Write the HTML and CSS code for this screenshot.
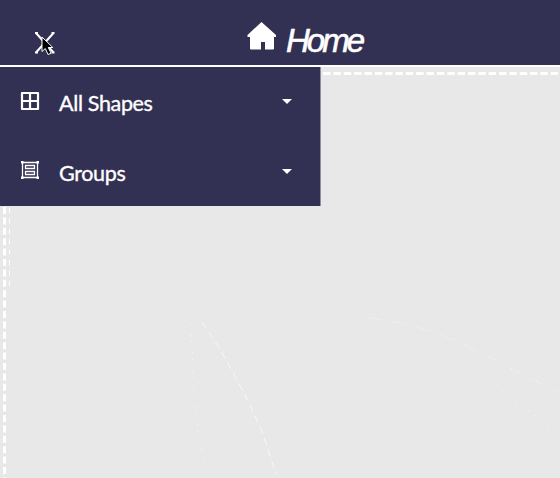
FILE: index.html
```
<!DOCTYPE html>
<html lang="en">
<head>
<meta charset="utf-8">
<title>Home</title>
<link rel="stylesheet" href="styles.css">
</head>
<body>
<header class="header">
  <button class="close" aria-label="Close menu">
    <svg width="20" height="22" viewBox="0 0 20 22"><path d="M1 1 18.500 20.500M18.500 1 1 20.500M0 1h3M16.500 1h3M0 20.500h3M16.500 20.500h3"/></svg>
  </button>
  <div class="brand">
    <svg class="house" width="30" height="28" viewBox="0 0 30 28"><path d="M14.500 0 29 13v2h-2v11.500q0 1-1 1h-8V20h-4v7.500H4q-1 0-1-1V15H.5v-2z"/></svg>
    <h1 class="title">Home</h1>
  </div>
  <svg class="cursor" width="13" height="20" viewBox="0 0 13 20"><path d="M1 1v14.500l3.300-3 2.700 6 3-1.300-2.700-5.700h4.500z"/></svg>
</header>
<main class="canvas">
  <svg class="guides" width="560" height="411" viewBox="0 67 560 411">
    <path class="border" d="M323 73.500H558" stroke-dasharray="7.500 2.850"/>
    <path class="border" d="M4.500 207V478" stroke-dasharray="7 3.400"/>
    <path class="inner" d="M9.500 208V288" stroke-dasharray="5 5.400"/>
    <path class="trace" d="M202 322 220 349 243 391 262 431 276 474" stroke-dasharray="7 5"/>
    <path class="trace" d="M368 318 398 322 438 333 481 353 524 375 560 393" stroke-dasharray="1 2 1 2 1 2 1 2 1 12"/>
    <path class="trace" d="M190 317 192 350 194 401 199 438 205 464" stroke-dasharray="1 5 1 11"/>
    <path class="trace" d="M491 380 510 395 529 411 542 422 557 431" stroke-dasharray="1 7"/>
  </svg>
  <nav class="menu">
    <a class="item">
      <svg class="icon" width="20" height="20" viewBox="0 0 20 20"><path class="grid" d="M2 2h16v16H2zM10 2v16M2 10h16"/></svg>
      <span class="label">All Shapes</span>
      <svg class="caret" width="10" height="5" viewBox="0 0 10 5"><path d="M0 0h10L5 5z"/></svg>
    </a>
    <a class="item">
      <svg class="icon" width="20" height="20" viewBox="0 0 20 20"><path class="frame" d="M2.500 2.500h15v15h-15zM5.500 5.500h9v3h-9zM5.500 11.500h9v3h-9z"/><path class="corner" d="M1 1h2.500v2.500H1zM16.500 1H19v2.500h-2.500zM1 16.500h2.500V19H1zM16.500 16.500H19V19h-2.500z"/></svg>
      <span class="label">Groups</span>
      <svg class="caret" width="10" height="5" viewBox="0 0 10 5"><path d="M0 0h10L5 5z"/></svg>
    </a>
  </nav>
</main>
</body>
</html>
```
FILE: styles.css
```
* { box-sizing: border-box; }
body {
  margin: 0;
  height: 478px;
  overflow: hidden;
  background: #e8e8e8;
  font-family: Lato, sans-serif;
}
.header {
  position: relative;
  display: flex;
  height: 67px;
  background: #333153;
  border-bottom: 2px solid #fff;
}
.close {
  display: flex;
  align-items: flex-start;
  width: 90px;
  padding: 32px 0 0 35px;
  border: 0;
  background: none;
}
.close svg { fill: none; stroke: #fff; stroke-width: 2; }
.cursor {
  position: absolute;
  left: 41px;
  top: 36px;
  fill: #000;
  stroke: #fff;
  stroke-width: 1;
}
.brand { display: flex; padding-left: 157px; }
.house { margin-top: 22px; fill: #fff; }
.title {
  margin: 21px 0 0 9px;
  color: #fff;
  font: italic 400 33px/40px "Liberation Sans", sans-serif;
  letter-spacing: -3px;
  -webkit-text-stroke: .6px #fff;
}
.canvas { position: relative; height: 411px; }
.guides { position: absolute; left: 0; top: 0; fill: none; stroke: #fff; }
.border { stroke-width: 3; }
.inner { stroke-width: 1; }
.trace { stroke-width: .7; }
.menu {
  position: relative;
  width: 321px;
  height: 139px;
  background: #333153;
  border-right: 1px solid #8f8da0;
}
.item {
  display: flex;
  align-items: center;
  height: 69.500px;
  padding: 0 28px 0 20px;
  color: #fff;
}
.icon { margin-right: 19px; margin-top: -2px; fill: none; stroke: #fff; }
.grid { stroke-width: 2.200; stroke-linejoin: round; }
.frame { stroke-width: 1.300; }
.corner { fill: #fff; stroke: none; }
.label {
  flex: 1;
  margin-top: 3px;
  font-size: 21.500px;
  line-height: 30px;
  letter-spacing: -.35px;
  -webkit-text-stroke: .35px #fff;
}
.caret { fill: #fff; }
```
